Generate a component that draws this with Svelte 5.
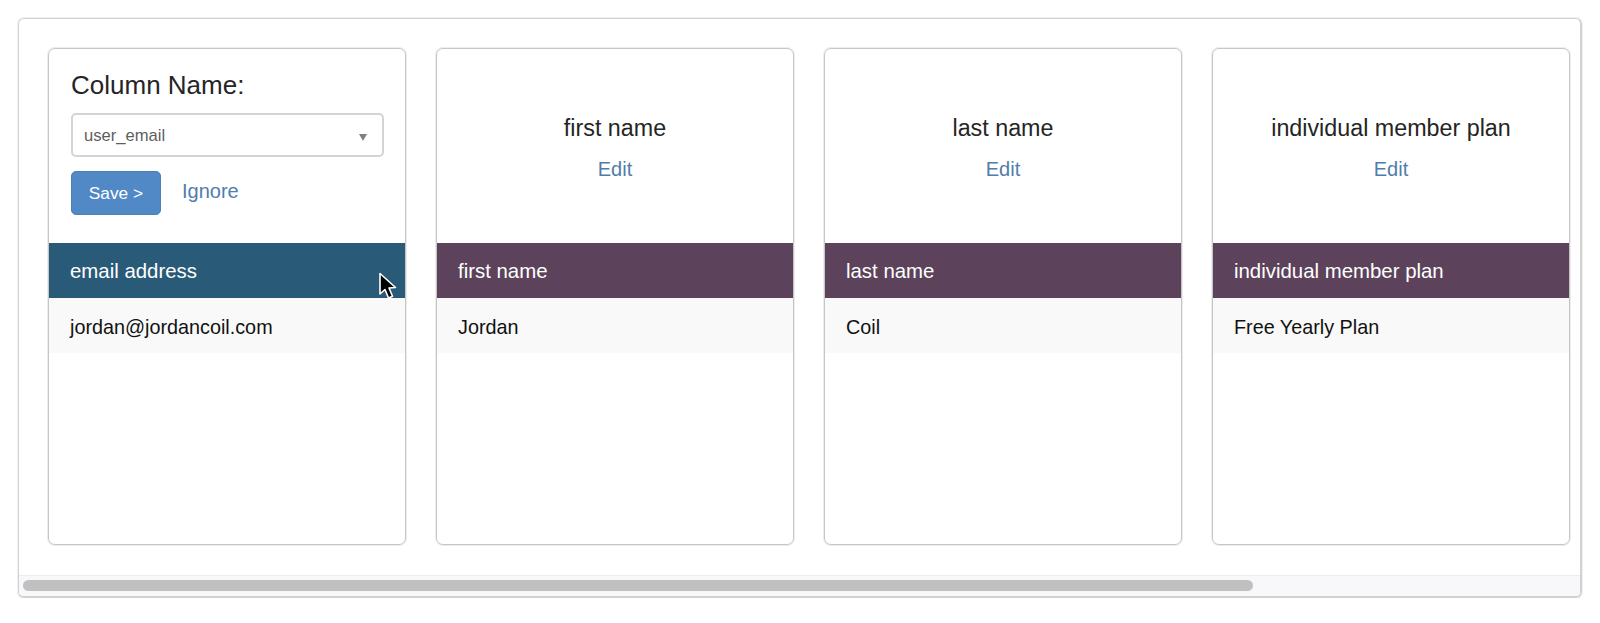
<script>
    const columns = [
        { name: 'first name', sample: 'Jordan' },
        { name: 'last name', sample: 'Coil' },
        { name: 'individual member plan', sample: 'Free Yearly Plan' }
    ];
</script>

<div class="page">
    <div class="frame">
        <div class="cards">
            <section class="card">
                <form class="panel editor" on:submit|preventDefault>
                    <label for="column">Column Name:</label>
                    <div class="select">
                        <select id="column">
                            <option>user_email</option>
                        </select>
                        <span class="arrow"></span>
                    </div>
                    <div class="actions">
                        <button type="submit">Save &gt;</button>
                        <a href="#ignore">Ignore</a>
                    </div>
                </form>
                <div class="head active">
                    email address
                    <svg class="cursor" width="20" height="30" viewBox="0 0 20 30">
                        <path d="M2 1.5 L2 22 L7 17.5 L10.5 26 L14.5 24.3 L11 16 L17.5 15.5 Z" fill="#000" stroke="#fff" stroke-width="1.6" stroke-linejoin="round"/>
                    </svg>
                </div>
                <div class="cell">jordan@jordancoil.com</div>
            </section>

            {#each columns as column}
                <section class="card">
                    <div class="panel summary">
                        <h3>{column.name}</h3>
                        <a href="#edit">Edit</a>
                    </div>
                    <div class="head">{column.name}</div>
                    <div class="cell">{column.sample}</div>
                </section>
            {/each}
        </div>

        <div class="scrollbar">
            <div class="thumb"></div>
        </div>
    </div>
</div>

<style>

:global(body){
    margin:0;
    background:#fff;
}

.page{
    padding:18px 18px 0;
    font-family:"Liberation Sans", Arial, sans-serif;
    color:#252525;
}

.frame{
    box-sizing:border-box;
    width:1564px;
    height:580px;
    display:flex;
    flex-direction:column;
    border:1px solid #d2d2d2;
    border-width:1px 2px 2px 1px;
    border-radius:6px;
    box-shadow:0 0 0 1px #f0f0f0;
    overflow:hidden;
}

.cards{
    flex:1;
    display:flex;
    gap:30px;
    padding:29px 0 0 29px;
    min-height:0;
}

.card{
    box-sizing:border-box;
    flex:0 0 358px;
    height:497px;
    border:1px solid #c6c6c6;
    border-radius:7px;
    box-shadow:0 0 0 1px #ececec;
    overflow:hidden;
}

.panel{
    box-sizing:border-box;
    height:194px;
}

.editor{
    padding:22px 21px 0 22px;
}

label{
    display:block;
    margin-bottom:14px;
    font-size:26px;
    line-height:28px;
}

.select{
    position:relative;
    height:44px;
}

select{
    box-sizing:border-box;
    width:100%;
    height:100%;
    padding:0 11px;
    appearance:none;
    background:#fff;
    border:2px solid #d4d4d4;
    border-radius:5px;
    font:16.6px "Liberation Sans", Arial, sans-serif;
    color:#5e5e5e;
}

.arrow{
    position:absolute;
    right:17px;
    top:21px;
    border-style:solid;
    border-width:7px 4px 0;
    border-color:#808080 transparent transparent;
}

.actions{
    display:flex;
    align-items:center;
    gap:21px;
    margin-top:14px;
}

button{
    box-sizing:border-box;
    width:90px;
    height:44px;
    background:#5089c6;
    border:1px solid #4a7fb8;
    border-radius:5px;
    font:17.3px "Liberation Sans", Arial, sans-serif;
    color:#fff;
}

a{
    color:#4f7dac;
    text-decoration:none;
}

.actions a{
    margin-bottom:3px;
    font-size:20px;
}

.summary{
    display:flex;
    flex-direction:column;
    align-items:center;
    padding-top:66px;
}

h3{
    margin:0 0 16px;
    font-size:23.3px;
    font-weight:400;
    line-height:26px;
}

.summary a{
    font-size:20px;
    line-height:24px;
}

.head{
    position:relative;
    height:55px;
    padding:0 21px;
    line-height:56px;
    font-size:20.4px;
    color:#fff;
    background:#5c435b;
}

.head.active{
    background:#295a77;
}

.cursor{
    position:absolute;
    left:329px;
    top:29px;
    overflow:visible;
}

.cell{
    height:55px;
    padding:0 21px;
    line-height:58px;
    font-size:19.8px;
    color:#111;
    background:#f9f9f9;
}

.scrollbar{
    flex:none;
    box-sizing:border-box;
    height:21px;
    padding:4px;
    background:#f8f8fa;
    border-top:1px solid #ececec;
}

.thumb{
    width:1230px;
    height:11px;
    border-radius:6px;
    background:#c0c0c0;
}

</style>
